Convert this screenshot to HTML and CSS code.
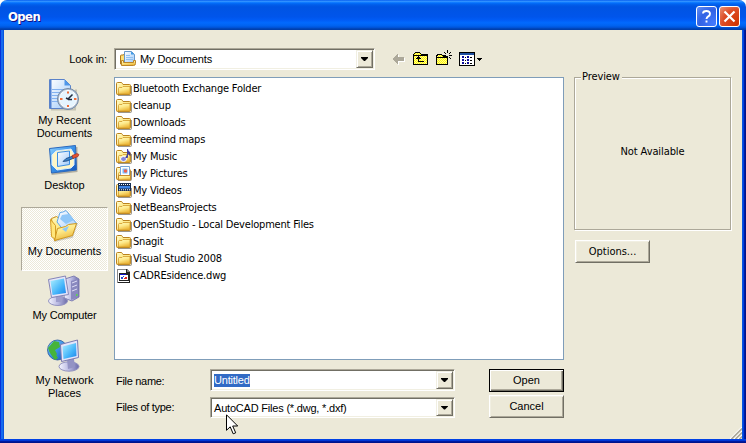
FILE: index.html
```html
<!DOCTYPE html>
<html lang="en">
<head>
<meta charset="utf-8">
<title>Open</title>
<link rel="stylesheet" href="styles.css">
</head>
<body>
<svg class="defs" width="0" height="0">
  <defs>
    <linearGradient id="gold" x1="0" y1="0" x2="0.4" y2="1"><stop offset="0" stop-color="#fffbc0"/><stop offset="0.5" stop-color="#fde98a"/><stop offset="1" stop-color="#edb93c"/></linearGradient>
    <linearGradient id="sky" x1="0" y1="0" x2="1" y2="1"><stop offset="0" stop-color="#b0f0ff"/><stop offset="0.6" stop-color="#45b5fa"/><stop offset="1" stop-color="#1d83ea"/></linearGradient>
    <linearGradient id="metal" x1="0" y1="0" x2="1" y2="0"><stop offset="0" stop-color="#f5f5ff"/><stop offset="0.5" stop-color="#b9b9e2"/><stop offset="1" stop-color="#6b6ba8"/></linearGradient>
    <linearGradient id="paper" x1="0" y1="0" x2="1" y2="1"><stop offset="0" stop-color="#fff"/><stop offset="1" stop-color="#9cc8fa"/></linearGradient>
    <linearGradient id="blue" x1="0" y1="0" x2="1" y2="1"><stop offset="0" stop-color="#8fd2ff"/><stop offset="0.5" stop-color="#3890e8"/><stop offset="1" stop-color="#1453b8"/></linearGradient>
    <pattern id="dither" width="2" height="2" patternUnits="userSpaceOnUse"><rect width="2" height="2" fill="#ff0"/><path d="M0 0h1v1H0zM1 1h1v1H1z" fill="#fff39a"/></pattern>
    <symbol id="folder" viewBox="0 0 16 16">
      <path d="M2 14.500h12.500q1 0 1-1V5" fill="none" stroke="#6f6a5c" stroke-opacity=".7"/>
      <path d="M.5 12.500v-10q0-1 1-1h3.500q1 0 1.500 1l.5 1h6.500q1 0 1 1v8q0 1-1 1h-12q-1 0-1-1z" fill="url(#gold)" stroke="#b9821f"/>
      <path d="M2 4v8M2.500 2.500h2" stroke="#fffbd6" fill="none"/>
      <path d="M2.500 13V7.500q0-1 1-1h2.500l1-1h7v7.500z" fill="url(#gold)" stroke="#d19b2b" stroke-width=".8"/>
    </symbol>
  </defs>
</svg>
<div class="window">
  <header class="titlebar">
    <h1 class="title">Open</h1>
    <button class="cap help" aria-label="Help"><svg width="21" height="21" viewBox="0 0 21 21"><path d="M7 7.500q0-2.500 3.500-2.500t3.500 2.700q0 1.700-1.700 2.700t-1.800 2.600M10.500 14.500v2" fill="none" stroke="#fff" stroke-width="1.900"/></svg></button>
    <button class="cap close" aria-label="Close"><svg width="21" height="21" viewBox="0 0 21 21"><path d="M5.500 5.500l10 10M15.500 5.500l-10 10" stroke="#fff" stroke-width="2.200"/></svg></button>
  </header>
  <main class="client">
    <div class="top">
      <label class="look sans"><span class="t-look">Look in:</span></label>
      <div class="combo lookcombo">
        <svg width="16" height="16" viewBox="0 0 16 16"><path d="M.5 13V5q0-1 1-1h2l1-1.500h3v11z" fill="#ffdf77" stroke="#b17919"/><path d="M4.500 12V.5h7l3 3V12z" fill="url(#paper)" stroke="#6898c9"/><path d="M11 .5v3h3.500z" fill="#3f9be8"/><path d="M6 4.500h4M6 6.500h7M6 8.500h7" fill="none" stroke="#8fc0f0"/><path d="M1.500 14.500V9.500h2v2h10v-2h2v3q0 2-2 2z" fill="url(#gold)" stroke="#bb8429"/></svg>
        <span class="t-mydoc sans">My Documents</span>
        <i class="drop"></i>
      </div>
      <div class="tools">
        <svg class="back" width="14" height="13" viewBox="0 0 14 13" shape-rendering="crispEdges"><path d="M1 7l6-6v4h6v4H7v4z" fill="#fff"/><path d="M0 6l6-5v3h6v4H6v3z" fill="#aca899"/></svg>
        <svg class="up" width="16" height="14" viewBox="0 0 16 14" shape-rendering="crispEdges"><path d="M.5 12.500v-10l2-2h4l2 2h6v10z" fill="url(#dither)" stroke="#000"/><path d="M1 3.500h14M5.500 4v5.500h5M3 6.500h5M4 5.500h3" fill="none" stroke="#000"/></svg>
        <svg class="new" width="18" height="16" viewBox="0 0 18 16" shape-rendering="crispEdges"><path d="M1.500 14.500v-8l1-2h4l2 2h4v8z" fill="url(#dither)" stroke="#000"/><path d="M1 7h12v1H1zM12 0h1v3h-1zM12 8h1v3h-1zM8 5h3v1H8zM14 5h3v1h-3zM9 2h1v1H9zM10 3h1v1h-1zM15 2h1v1h-1zM14 3h1v1h-1zM14 7h1v1h-1zM15 8h1v1h-1z"/></svg>
        <svg class="view" width="24" height="14" viewBox="0 0 24 14" shape-rendering="crispEdges"><path d="M.5.500h15v13H.5z" fill="#fff" stroke="#000"/><path d="M1 1h14v2H1z" fill="#1e4f9f"/><path d="M3 4h2v2H3zM8 4h2v2H8zM3 7h2v2H3zM8 7h2v2H8zM3 10h2v2H3zM8 10h2v2H8z" fill="#0a0a9a"/><path d="M6 5h1v1H6zM11 5h2v1h-2zM6 8h1v1H6zM11 8h2v1h-2zM6 11h1v1H6zM11 11h2v1h-2zM18 6h5v1h-5zM19 7h3v1h-3zM20 8h1v1h-1z"/></svg>
      </div>
    </div>
    <div class="middle">
      <nav class="places sans">
        <a class="place recent"><svg width="32" height="32" viewBox="0 0 32 32"><path d="M3 30.500h24l1-20" fill="none" stroke="#89867c" stroke-opacity=".4" stroke-width="2"/><path d="M1.500.500h15l6 6v23h-21z" fill="url(#paper)" stroke="#5a82c9"/><path d="M2 1h1.500v28H2z" fill="#4f80d2"/><path d="M16.500.500v6h6z" fill="#4f97e9"/><path d="M4 10.500h12M4 13.500h9M4 16.500h7M4 19.500h6M4 22.500h7" stroke="#83b2f0"/><circle cx="20" cy="20" r="10.500" fill="#b3c3d6" stroke="#7388a3"/><circle cx="20" cy="20" r="8.600" fill="#e6f5ff" stroke="#fff"/><path d="M20 12.500v2M20 26v2M12 20h2.500M26 20h2.500" stroke="#f06d38" stroke-width="2"/><path d="M24.500 15.500L20 20l-2-1M20 20.500h4" fill="none" stroke="#222c3d" stroke-width="1.500"/></svg><span>My Recent</span><span>Documents</span></a>
        <a class="place desktop"><svg width="32" height="32" viewBox="0 0 32 32"><path d="M3.500 30l25-3V3" fill="none" stroke="#77756c" stroke-opacity=".5" stroke-width="2"/><path d="M1.500 4.500L27.500 1.500 28.500 26 3.500 29z" fill="url(#blue)" stroke="#2a68bd"/><path d="M8 7l15-2 3 5v11l-3 3-14 2-5-5V11z" fill="#fff6c6" stroke="#d9edff"/><path d="M9.500 8.500l12-1.500v13.500l-12 2z" fill="url(#paper)" stroke="#3b8ee4"/><path d="M15 17.500l3-3 7-2.500 1 2-7 3z" fill="#3982c8" stroke="#16437c" stroke-width=".8"/><path d="M24 11.500l5-2 2 1-1 2-5 2z" fill="#e05330" stroke="#982818" stroke-width=".6"/></svg><span>Desktop</span></a>
        <a class="place docs selected"><svg width="32" height="32" viewBox="0 0 32 32"><path d="M6 31l18-4 5-14" fill="none" stroke="#8e8a7e" stroke-opacity=".4" stroke-width="2"/><path d="M3.500 8.500l5-2 3 2 10 1 3 14-18 7z" fill="url(#gold)" stroke="#c68b16"/><path d="M12 2.500q3 0 6-2L29 14 17 22 9 12z" fill="url(#paper)" stroke="#60a7e9"/><path d="M14 5l7-1 5 6-8 4-6-5z" fill="#8ec6f8"/><path d="M2.500 9.500l5 6v14l-4-3z" fill="#ffe67c" stroke="#d69d24"/><path d="M6.500 30.500l3-12 8-2 3-2 8-1-4 12z" fill="url(#gold)" stroke="#cf981e"/><path d="M14 19l7-3-3 6z" fill="#8ec8f4"/></svg><span>My Documents</span></a>
        <a class="place computer"><svg width="34" height="32" viewBox="0 0 34 32"><path d="M18 4l9-3 5 3v18l-7 4-8-3z" fill="url(#metal)" stroke="#8080b4"/><path d="M24 6l7-2v18l-7 3z" fill="#8989bf"/><path d="M25 8l5-2M25 12l5-2M25 16l5-2" stroke="#dedef6"/><path d="M29 19h1.500v2H29z" fill="#58d84b"/><ellipse cx="11" cy="26" rx="9.500" ry="4.500" fill="url(#metal)" stroke="#9292c0"/><path d="M9 20h7l-1 7H9z" fill="#9d9dcc"/><path d="M1.500 4.500L18.500 1l3 18.500-17 3z" fill="#e5e5fa" stroke="#8585b8"/><path d="M3.500 6L17 3.500 19 18 5.500 20z" fill="url(#sky)"/></svg><span class="t-comp">My Computer</span></a>
        <a class="place network"><svg width="34" height="34" viewBox="0 0 34 34"><circle cx="10.500" cy="11" r="10" fill="url(#blue)" stroke="#144991" stroke-width=".7"/><path d="M7 2l5 1 1 5-5 3 2 4-3 5-4-6-2-5zM2 12l5 1 4 6-3 2z" fill="#46b43b"/><ellipse cx="22" cy="27.500" rx="10" ry="4.700" fill="url(#metal)" stroke="#9292c0"/><path d="M20 20h7l1 8-7 2z" fill="#9393c4"/><path d="M13.500 5.500L30.500 1l1 17.500-17 4z" fill="#e5e5fa" stroke="#7a7ab0"/><path d="M15.500 7.500L29 4l.500 13-13 3z" fill="url(#sky)"/></svg><span>My Network</span><span>Places</span></a>
      </nav>
      <ul class="files tahoma">
        <li><svg><use href="#folder"/></svg><span>Bluetooth Exchange Folder</span></li>
        <li><svg><use href="#folder"/></svg><span>cleanup</span></li>
        <li><svg><use href="#folder"/></svg><span>Downloads</span></li>
        <li><svg><use href="#folder"/></svg><span>freemind maps</span></li>
        <li><svg viewBox="0 0 16 16"><use href="#folder"/><ellipse cx="7.500" cy="10" rx="3" ry="2.500" fill="#8585dc" stroke="#fff"/><path d="M9.500 8.500h2V0q0 2.500 2.500 3.500v3q-1-2-2.500-2" fill="#3939a2" stroke="#32329a" stroke-width=".8"/></svg><span>My Music</span></li>
        <li><svg viewBox="0 0 16 16"><use href="#folder"/><path d="M4.500.500h9v10h-9z" fill="#fff" stroke="#79a5d8"/><path d="M6.500 2.500h5v5h-5z" fill="#78beff"/><circle cx="9.500" cy="5" r="1.800" fill="#ee614d"/><path d="M2.500 14V9.500h12V14z" fill="url(#gold)" stroke="#c68b2c"/></svg><span>My Pictures</span></li>
        <li><svg viewBox="0 0 16 16"><use href="#folder"/><path d="M2 0h13v8H2z" fill="#172f54"/><path d="M3 3h11v2.500H3z" fill="#3c83e4"/><path d="M3 1.500h11M3 6.800h11" stroke="#fff" stroke-dasharray="1 1"/></svg><span>My Videos</span></li>
        <li><svg><use href="#folder"/></svg><span>NetBeansProjects</span></li>
        <li><svg><use href="#folder"/></svg><span>OpenStudio - Local Development Files</span></li>
        <li><svg><use href="#folder"/></svg><span>Snagit</span></li>
        <li><svg><use href="#folder"/></svg><span>Visual Studio 2008</span></li>
        <li><svg viewBox="0 0 16 16" shape-rendering="crispEdges"><path d="M1 1h10l3 3v11H1z" fill="#888"/><path d="M2 2h8v3h3v9H2z" fill="#fff"/><path d="M13 5h1v10H2v-1h11zM10 1h1v3h3v1h-4z" fill="#222"/><path d="M3 5h10v8H3z" fill="#222"/><path d="M4 7h8v5H4z" fill="#fff"/><path d="M4 6h6v1H4z" fill="#1010d0"/><path d="M5 9h2v2H5zM7 8h1v1H7z" fill="#2448cc"/><path d="M9 9h2v2H9zM8 10h1v1H8z" fill="#e02020"/></svg><span>CADREsidence.dwg</span></li>
      </ul>
      <aside class="side tahoma">
        <fieldset class="preview"><legend>Preview</legend><span class="t-na">Not Available</span></fieldset>
        <button class="btn tahoma"><span>Options...</span></button>
      </aside>
    </div>
    <form class="bottom sans">
      <div class="row name"><label>File name:</label><div class="combo"><span class="sel">Untitled</span><i class="drop"></i></div><button type="button" class="btn default sans"><span>Open</span></button></div>
      <div class="row type"><label>Files of type:</label><div class="combo"><span class="val">AutoCAD Files (*.dwg, *.dxf)</span><i class="drop"></i></div><button type="button" class="btn sans"><span>Cancel</span></button></div>
    </form>
  </main>
  <svg class="grip" width="12" height="12" viewBox="0 0 12 12"><path d="M0 12L12 0M4 12l8-8M8 12l4-4" stroke="#fff" stroke-width="1.200"/><path d="M1.500 12L12 1.500M5.500 12L12 5.500M9.500 12L12 9.500" stroke="#aca899" stroke-width="1.600"/></svg>
  <svg class="cursor" width="13" height="21" viewBox="0 0 13 21"><path d="M.5.800v15.500l3.700-3.500 3 7 2.500-1-3-6.800h5z" fill="#fff" stroke="#000"/></svg>
</div>
</body>
</html>
```

FILE: styles.css
```css
* { box-sizing: border-box; }
body { margin: 0; background: #fff; font-size: 11px; color: #000; }
.defs { position: absolute; }
svg { display: block; flex: none; }
span { white-space: nowrap; }
button { font-size: 11px; padding: 0; margin: 0; color: #000; }
.sans { font-family: "Liberation Sans", sans-serif; font-size: 11px; }
.tahoma { font-family: "DejaVu Sans Condensed", "DejaVu Sans", sans-serif; font-stretch: condensed; font-size: 11px; }

.window {
  position: relative; width: 746px; height: 443px; overflow: hidden;
  border-radius: 7px 7px 0 0; background: #ece9d8;
  display: flex; flex-direction: column;
}
/* Window frame: lit on the left, shaded on the right and bottom */
.window::after {
  content: ""; position: absolute; inset: 30px 0 0; pointer-events: none;
  background:
    linear-gradient(#0041e4 0 1px, #0038d8 1px 2px, #0019a0 2px 3px, #00138c 3px) bottom / 100% 4px no-repeat,
    linear-gradient(90deg, #0831d9 0 1px, #166aee 1px 3px, #0855dd 3px) left / 4px 100% no-repeat,
    linear-gradient(90deg, #0855dd 0 1px, #0041e4 1px 2px, #001ea0 2px 3px, #00138c 3px) right / 4px 100% no-repeat;
}
.titlebar {
  height: 30px; flex: none; display: flex; align-items: center; gap: 2px; padding: 2px 6px 0 8px;
  background: linear-gradient(#0058ee 0, #3593ff 4%, #288eff 6%, #127dff 8%, #036ffc 10%, #0262ee 14%, #0057e5 20%, #0054e3 24%, #0055eb 56%, #005bf5 66%, #026afe 76%, #0062ef 86%, #0052d6 92%, #0040ab 97%, #003db0 100%);
}
.title { margin: 1px auto 0 0; font: bold 13px "DejaVu Sans Condensed", sans-serif; font-stretch: condensed; color: #fff; text-shadow: 1px 1px #0f1089; letter-spacing: -.6px; }
.cap { width: 21px; height: 21px; border: 1px solid #fff; border-radius: 3px; padding: 0; display: flex; align-items: center; justify-content: center; }
.help { background: radial-gradient(circle at 90% 90%, #447bff, #3262e4 60%, #6791f5); }
.close { background: radial-gradient(circle at 90% 90%, #d23400, #dc4c26 60%, #eb9376); }

.client { flex: 1; min-height: 0; padding: 18px 11px 0 17px; margin: 0 4px; }
.top { display: flex; height: 22px; align-items: center; }
.look { width: 93px; padding-right: 7px; display: flex; justify-content: flex-end; letter-spacing: -.1px; }
.combo {
  display: flex; align-items: center; height: 22px; background: #fff; padding: 0 1px 0 3px;
  border: 1px solid; border-color: #aca899 #fff #fff #aca899;
  box-shadow: inset 1px 1px #716f64, inset -1px -1px #f1efe2;
}
.lookcombo { width: 261px; padding-left: 5px; gap: 4px; }
.t-mydoc { letter-spacing: -.1px; }
.drop {
  width: 17px; height: 18px; margin: 1px 0 1px auto; background: #ece9d8; display: flex; align-items: center; justify-content: center;
  border: 1px solid; border-color: #f1efe2 #716f64 #716f64 #f1efe2;
  box-shadow: inset 1px 1px #fff, inset -1px -1px #aca899;
}
.drop::after { content: ""; width: 7px; height: 4px; background: #000; clip-path: polygon(0 0, 100% 0, 100% 25%, 57% 100%, 43% 100%, 0 25%); }
.tools { display: flex; align-items: center; padding-left: 17px; }
.up { margin-left: 7px; }
.new { margin: -2px 0 0 6px; }
.view { margin-left: 6px; }

.middle { display: grid; grid-template: 283px / 87px 450px 1fr; column-gap: 6px; margin-top: 7px; }
.places { display: flex; flex-direction: column; }
.place { display: flex; flex-direction: column; align-items: center; height: 64px; flex: none; padding-top: 3px; border: 1px solid transparent; }
.place span { line-height: 13px; }
.place svg { margin: 0 2px 2px 0; }
.recent { height: 65px; padding-top: 1px; }
.recent svg, .desktop svg, .docs svg { margin-bottom: 3px; }
.desktop { padding-top: 1px; }
.docs { margin-top: 1px; padding-top: 2px; }
.t-comp { letter-spacing: -.2px; }
.network svg { margin-bottom: 1px; }
.selected {
  border-color: #aca899 #fff #fff #aca899;
  background: conic-gradient(#fff 25%, #ece9d8 0 50%, #fff 0 75%, #ece9d8 0) 0 0 / 2px 2px;
}
.files { margin: 0; padding: 2px 1px; list-style: none; background: #fff; border: 1px solid #7f9db9; letter-spacing: -.2px; }
.files li { display: flex; align-items: center; height: 17px; gap: 1px; }
.files svg { width: 16px; height: 16px; }
.side { padding-left: 4px; }
.preview {
  display: flex; justify-content: center; margin: -6px 0 0; padding: 0; width: 157px; height: 159px; min-width: 0;
  border: 1px solid #aca899; box-shadow: 1px 1px #fff, inset 1px 1px #fff;
}
.preview legend { margin-left: 6px; padding: 0 2px 0 1px; line-height: 12px; background: #ece9d8; letter-spacing: -.1px; }
.t-na { display: block; margin-top: 62px; letter-spacing: -.1px; }
.btn {
  display: flex; align-items: center; justify-content: center; width: 75px; height: 23px; padding-bottom: 1px; background: #ece9d8;
  border: 1px solid; border-color: #fff #716f64 #716f64 #fff; box-shadow: inset 1px 1px #f1efe2, inset -1px -1px #aca899;
}
.side .btn { margin: 10px 0 0 1px; padding: 0; }
.bottom { padding: 9px 0 0 93px; }
.row { display: flex; align-items: flex-start; }
.row label { width: 96px; padding: 6px 0 0 2px; letter-spacing: -.3px; }
.row .combo { width: 245px; }
.row .btn { margin-left: 34px; }
.name { height: 26px; }
.default { border-color: #000; box-shadow: inset 1px 1px #fff, inset -1px -1px #716f64, inset -2px -2px #aca899; }
.type .combo { margin-top: 2px; height: 21px; }
.type .drop { height: 17px; }
.sel { background: #316ac5; color: #fff; line-height: 13px; letter-spacing: -.2px; }
.val { letter-spacing: -.2px; }
.grip { position: absolute; right: 4px; bottom: 4px; }
.cursor { position: absolute; left: 226px; top: 414px; }
```
